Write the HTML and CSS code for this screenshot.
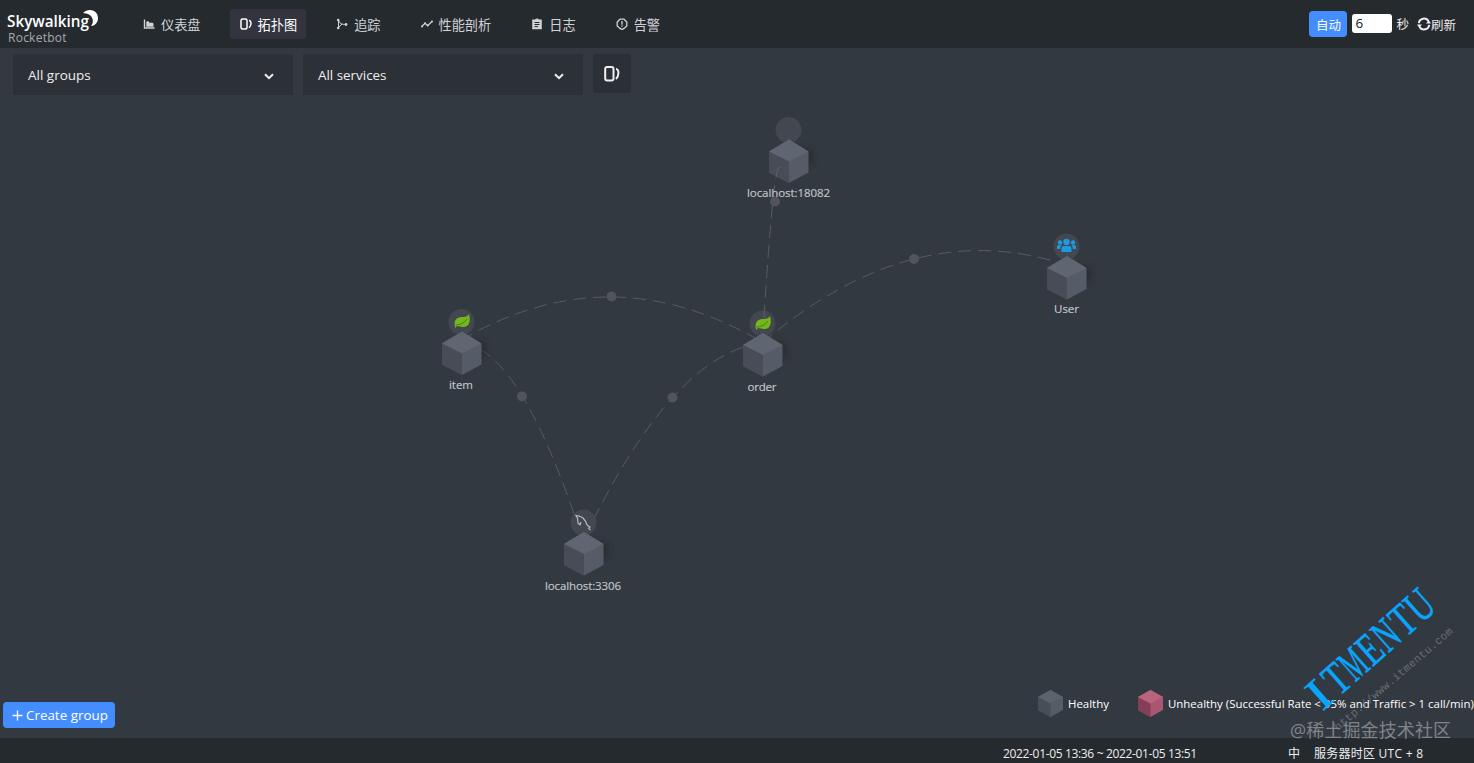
FILE: index.html
```html
<!DOCTYPE html>
<html lang="zh">
<head>
<meta charset="utf-8">
<title>Skywalking Rocketbot</title>
<link rel="stylesheet" href="styles.css">
</head>
<body>
<div class="app">
  <header class="header">
    <div class="brand">
      <svg class="logo" width="98" height="26" viewBox="0 0 98 26">
        <text class="logo-text" x="0" y="19.500" textLength="82" lengthAdjust="spacingAndGlyphs">Skywalking</text>
        <path d="M76 6C80 2 87 2 90 7C93 13 89 19 84 19C88 15 86 6 76 6Z" fill="#fff"/>
      </svg>
      <span class="product">Rocketbot</span>
    </div>
    <nav class="nav">
      <a class="nav-item"><svg class="icon" viewBox="0 0 12 12"><path d="M1.5 1.5V10H11.5" fill="none" stroke="currentColor" stroke-width="1.4"/><path d="M3.300 8.800V3.800L5 3L7 5L9 4.600L10.500 5.500V8.800Z" fill="currentColor"/></svg><span>仪表盘</span></a>
      <a class="nav-item active"><svg class="icon" viewBox="0 0 12 12"><rect x="1" y="1" width="6" height="10" rx="1.5" fill="none" stroke="currentColor" stroke-width="1.5"/><path d="M9 2.5C11.7 2.5 11.5 8 9 9.7" fill="none" stroke="currentColor" stroke-width="1.5"/></svg><span>拓扑图</span></a>
      <a class="nav-item"><svg class="icon" viewBox="0 0 12 12"><path d="M2.5 1.5V10.5M2.5 2C3.5 5.5 5.5 6.5 10 6.5M2.5 9.5L6 6" fill="none" stroke="currentColor"/><circle cx="2.2" cy="2" r="1.3" fill="currentColor"/><circle cx="2.2" cy="10" r="1.3" fill="currentColor"/><circle cx="10" cy="6.5" r="1.4" fill="currentColor"/></svg><span>追踪</span></a>
      <a class="nav-item"><svg class="icon" viewBox="0 0 12 12"><path d="M.8 8.5L4 5.3L6.7 7.6L11.2 3.2" fill="none" stroke="currentColor" stroke-width="1.3"/><g fill="currentColor"><circle cx="1" cy="8.4" r="1"/><circle cx="4" cy="5.2" r="1"/><circle cx="6.8" cy="7.5" r="1"/><circle cx="11" cy="3.4" r="1"/></g></svg><span>性能剖析</span></a>
      <a class="nav-item"><svg class="icon" viewBox="0 0 12 12"><path d="M1.2 1.6H4Q6-.8 8 1.6H10.8V11.3H1.2Z" fill="currentColor"/><path d="M3.5 4.5H8.5M3.5 6.5H8.5M3.5 8.6H7" stroke="#252a2f" stroke-width="1"/></svg><span>日志</span></a>
      <a class="nav-item"><svg class="icon" viewBox="0 0 12 12"><path d="M4 1.2H8L10.8 4V8L8 10.4L6 11.5L4 10.4L1.2 8V4Z" fill="none" stroke="currentColor" stroke-width="1.3"/><path d="M6 3V6.7M6 7.6V8.8" stroke="currentColor" stroke-width="1.3"/></svg><span>告警</span></a>
    </nav>
    <div class="reload">
      <button class="auto">自动</button>
      <input class="seconds" value="6">
      <span class="unit">秒</span>
      <svg class="refresh-icon" viewBox="0 0 14 14"><path d="M1.800 6.200A5.200 5.200 0 0 1 11.500 4.300M12.200 7.800A5.200 5.200 0 0 1 2.500 9.700" fill="none" stroke="currentColor" stroke-width="2"/><path d="M9 6.500H14L11.800 3.200ZM0 7.500H5L2.200 10.800Z" fill="currentColor"/></svg>
      <span class="refresh">刷新</span>
    </div>
  </header>

  <main class="stage">
    <svg class="topology" width="1474" height="690" viewBox="0 48 1474 690">
      <defs>
        <filter id="soft" x="-50%" y="-50%" width="200%" height="200%"><feGaussianBlur stdDeviation="2.500"/></filter>
        <g id="cube">
          <path d="M0 12L20 0L39.500 12V33L20 43.500L0 33Z" fill="#555c67"/>
          <path d="M0 12L20 0L39.500 12L20 22Z" fill="#5f6671"/>
          <path d="M0 12L20 22V43.500L0 33Z" fill="#474c57"/>
        </g>
        <g id="node">
          <path d="M14 16L25 21V34L12 39Z" fill="#20252b" opacity=".5" filter="url(#soft)"/>
          <circle cx="0" cy="0" r="13" fill="#434750"/>
          <use href="#cube" x="-19.5" y="9.5"/>
        </g>
        <path id="leaf" d="M-7 6C-9-2-4-4 1-4C4-4 6-5 7-7C9 1 7 6 1 6C-1 6-3 5-5 5L-7 7Z" fill="#74b71b"/>
      </defs>
      <g class="edges">
        <path d="M461 340Q611 253 762 342"/>
        <path d="M762 343Q914 214 1066 265"/>
        <path d="M461 342Q522 350 583 541"/>
        <path d="M762 343Q672 354 583 541"/>
      </g>
      <use href="#node" x="788.5" y="130"/>
      <use href="#node" x="1066.5" y="246.500"/>
      <use href="#node" x="461.500" y="322"/>
      <use href="#node" x="762.500" y="323.500"/>
      <use href="#node" x="583.500" y="522.500"/>
      <g class="edges"><path d="M764 318Q774 157 780 168"/></g>
      <g fill="#50545d">
        <circle cx="611.500" cy="296.500" r="5"/><circle cx="914" cy="259" r="5"/><circle cx="522" cy="396.500" r="5"/><circle cx="672.500" cy="397.500" r="5"/><circle cx="775" cy="201.500" r="5"/>
      </g>
      <use href="#leaf" x="462" y="321"/>
      <use href="#leaf" x="763" y="323"/>
      <path d="M756.500 327C761 327 765 325 768 321M455.500 325C460 325 464 323 467 319" fill="none" stroke="#426622" stroke-width=".8"/>
      <g fill="#1d9be2">
        <circle cx="1066.500" cy="242" r="3.200"/><circle cx="1060" cy="242.500" r="2.200"/><circle cx="1073" cy="242.500" r="2.200"/>
        <path d="M1061.500 252V249Q1061.500 246 1064 246H1069Q1071.500 246 1071.500 249V252ZM1057 249V247Q1057 245 1059 245H1061.500Q1060 247 1060 249ZM1073 249Q1073 247 1071.500 245H1074Q1076 245 1076 247V249Z"/>
      </g>
      <path d="M580 525L578 523L577.500 518L576 515.500L579 516L583 518Q586 521 587 525L590 527L588.500 528L590.500 530M580 525L581 522" fill="none" stroke="#b9bdc2" stroke-width="1.200"/>
      <g class="labels">
        <text x="747" y="197" textLength="83">localhost:18082</text>
        <text x="1054" y="313" textLength="25">User</text>
        <text x="449" y="389" textLength="24">item</text>
        <text x="747.500" y="391" textLength="29">order</text>
        <text x="545" y="590" textLength="76">localhost:3306</text>
      </g>
    </svg>
    <div class="toolbar">
      <div class="select groups"><span>All groups</span><svg class="chevron" viewBox="0 0 10 7"><path d="M1 1.2L5 5.200L9 1.2" fill="none" stroke="currentColor" stroke-width="2"/></svg></div>
      <div class="select services"><span>All services</span><svg class="chevron" viewBox="0 0 10 7"><path d="M1 1.2L5 5.200L9 1.2" fill="none" stroke="currentColor" stroke-width="2"/></svg></div>
      <button class="square"><svg width="16" height="16" viewBox="0 0 16 16"><rect x="1.200" y="1" width="8.300" height="13.500" rx="2" fill="none" stroke="currentColor" stroke-width="2"/><path d="M12 3C15.500 3 15 10.500 12 13" fill="none" stroke="currentColor" stroke-width="2"/></svg></button>
    </div>
    <div class="bottom">
      <button class="create"><svg width="11" height="11" viewBox="0 0 11 11"><path d="M5.500 .5V10.500M.5 5.500H10.500" stroke="currentColor" stroke-width="1.3"/></svg><span>Create group</span></button>
      <div class="legend">
        <svg width="25" height="27" viewBox="0 0 25 27"><path d="M0 7L12.500 0L25 7V20L12.500 27L0 20Z" fill="#545c66"/><path d="M0 7L12.500 13.500V27L0 20Z" fill="#474e58"/><path d="M0 7L12.500 0L25 7L12.500 13.500Z" fill="#5b636d"/></svg>
        <span class="healthy">Healthy</span>
        <svg width="25" height="27" viewBox="0 0 25 27"><path d="M0 7L12.500 0L25 7V20L12.500 27L0 20Z" fill="#a85770"/><path d="M0 7L12.500 13.500V27L0 20Z" fill="#853e56"/><path d="M0 7L12.500 0L25 7L12.500 13.500Z" fill="#b9637c"/></svg>
        <span class="unhealthy">Unhealthy (Successful Rate &lt; 95% and Traffic &gt; 1 call/min)</span>
      </div>
    </div>
  </main>

  <footer class="footer">
    <span class="range">2022-01-05 13:36 ~ 2022-01-05 13:51</span>
    <span class="lang">中</span>
    <span class="zone">服务器时区 UTC + 8</span>
  </footer>

  <svg class="watermark" width="194" height="193" viewBox="0 0 194 193">
    <g transform="translate(43 141) rotate(-41.500)">
      <text class="mark" y="0"><tspan x="-1" textLength="18" lengthAdjust="spacingAndGlyphs">I</tspan><tspan x="21" textLength="21" lengthAdjust="spacingAndGlyphs">T</tspan><tspan x="43" textLength="22" lengthAdjust="spacingAndGlyphs">M</tspan><tspan x="66" textLength="20" lengthAdjust="spacingAndGlyphs">E</tspan><tspan x="87" textLength="21" lengthAdjust="spacingAndGlyphs">N</tspan><tspan x="110" textLength="20" lengthAdjust="spacingAndGlyphs">T</tspan><tspan x="131" textLength="23" lengthAdjust="spacingAndGlyphs">U</tspan></text>
    </g>
    <text class="url" transform="translate(58 161) rotate(-40.500)" textLength="152">http://www.itmentu.com</text>
    <text class="community" x="10" y="167" textLength="161">@稀土掘金技术社区</text>
  </svg>
</div>
</body>
</html>
```
FILE: styles.css
```css
* { box-sizing: border-box; }
body {
  margin: 0;
  overflow: hidden;
  background: #333940;
  color: #eee;
  font-family: "Open Sans", "Noto Sans", "Noto Sans CJK SC", sans-serif;
}
button { border: 0; font: inherit; color: inherit; padding: 0; }
.app { position: relative; display: flex; flex-direction: column; width: 1474px; height: 763px; overflow: hidden; }

.header { display: flex; flex: 0 0 48px; background: #252a2f; padding-right: 18px; }
.brand { display: flex; flex-direction: column; width: 133px; padding: 7px 0 0 7px; }
.logo { display: block; overflow: visible; }
.logo-text { font: 600 17px "Open Sans", sans-serif; fill: #fff; }
.product { margin-top: -2px; padding-left: 1px; font-size: 12px; line-height: 14px; color: #a5a9ae; letter-spacing: .25px; }
.nav { display: flex; gap: 20px; padding-top: 9px; }
.nav-item { display: flex; align-items: center; gap: 6px; height: 30px; padding: 0 10px; border-radius: 4px; font-size: 13.2px; color: #d0d3d6; white-space: nowrap; }
.nav-item.active { background: #333440; color: #fff; padding-right: 9px; }
.nav-item:first-child { padding-right: 9px; }
.icon { width: 12px; height: 12px; flex: none; }
.nav-item span { padding-top: 2px; line-height: 20px; }
.reload { display: flex; align-items: center; margin-left: auto; font-size: 12.5px; }
.auto { width: 38px; height: 26px; margin-right: 5px; border-radius: 4px; background: #448dfe; color: #fff; }
.seconds { width: 40px; height: 19px; margin: -2px 4px 0 0; padding: 0 3px; border: 0; border-radius: 3px; background: #fff; color: #111; font: 13.5px "Open Sans", sans-serif; }
.unit { margin: -2px 8px 0 0; }
.refresh-icon { width: 14px; height: 14px; }
.refresh { margin-top: 1px; }

.stage { position: relative; flex: 1; display: flex; flex-direction: column; justify-content: space-between; }
.topology { position: absolute; inset: 0; }
.edges { fill: none; stroke: #64686f; stroke-width: 1; stroke-dasharray: 13 7; opacity: .75; }
.labels { font-size: 11.5px; fill: #c4c7cb; stroke: #c4c7cb; stroke-width: .15px; }
.toolbar { position: relative; display: flex; gap: 10px; padding: 6px 13px; }
.select { display: flex; align-items: center; justify-content: space-between; width: 280px; height: 41px; padding: 0 19px 0 15px; background: #2c3138; }
.groups { font-size: 13.5px; }
.services { font-size: 13.4px; }
.chevron { width: 10px; height: 7px; margin-top: 3px; }
.square { display: grid; place-items: center; width: 38px; height: 39px; border-radius: 4px; background: #2b3036; }
.square svg { margin-left: -1px; }
.bottom { position: relative; display: flex; align-items: flex-start; justify-content: space-between; height: 49px; }
.create { display: flex; align-items: center; gap: 3px; width: 112px; height: 26px; margin: 13px 0 0 3px; padding-left: 9px; border-radius: 4px; background: #448dfe; color: #fff; font-size: 13.4px; white-space: nowrap; }
.create svg { flex: none; }
.legend { display: flex; align-items: center; width: 436px; height: 28px; font-size: 11.45px; color: #fff; white-space: nowrap; }
.legend svg { flex: none; margin-right: 5px; }
.healthy { flex: none; width: 70px; }

.footer { display: flex; align-items: center; flex: 0 0 25px; padding: 5px 0 0 1003px; background: #252a2f; font-size: 12px; white-space: nowrap; }
.range { width: 285px; letter-spacing: -.34px; }
.lang { width: 26px; }
.zone { letter-spacing: .25px; }
.watermark { position: absolute; right: 0; bottom: 0; pointer-events: none; }
.mark { font: 46px "Liberation Serif", serif; fill: #08a5fb; stroke: #08a5fb; stroke-width: .6px; }
.url { font: 11px "Liberation Mono", monospace; fill: #686c73; }
.community { font: 18px "Open Sans", "Noto Sans CJK SC", sans-serif; fill: #80848a; }
```
